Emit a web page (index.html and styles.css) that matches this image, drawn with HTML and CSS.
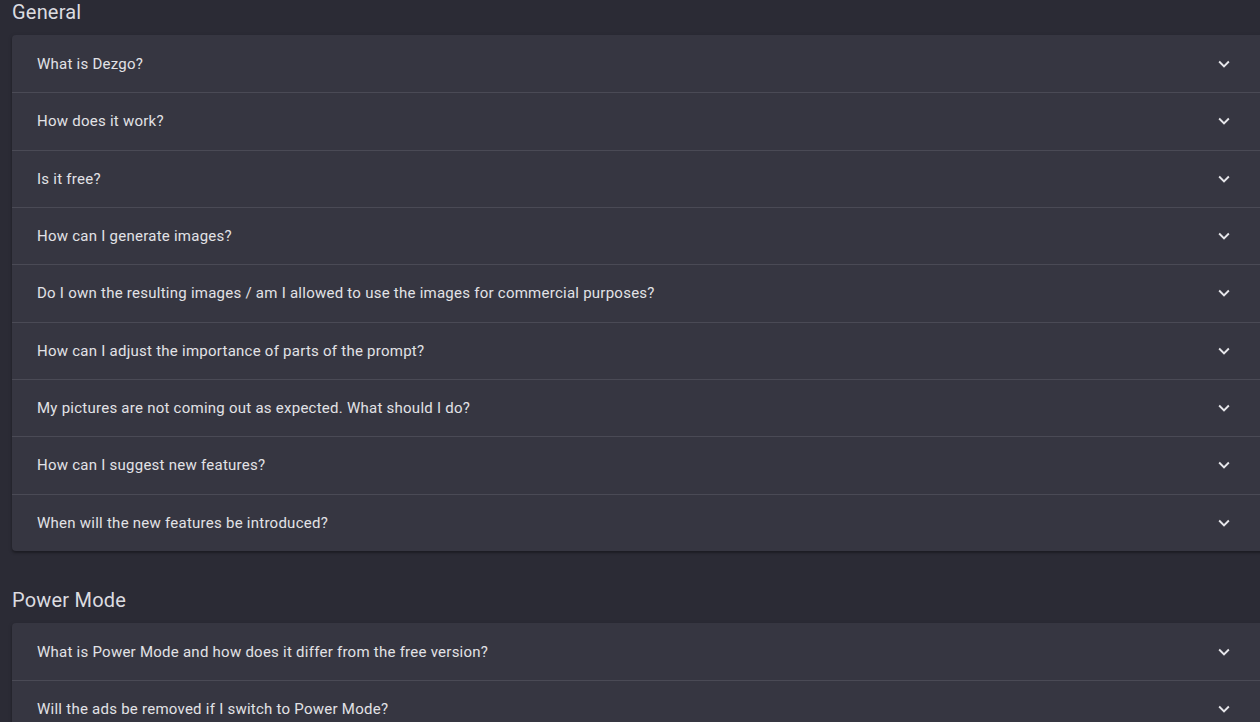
FILE: index.html
```html
<!DOCTYPE html>
<html lang="en">
<head>
    <meta charset="UTF-8">
    <title>FAQ - Dezgo</title>
    <link rel="stylesheet" href="styles.css">
</head>
<body>
    <section class="faq-section">
        <h2 class="faq-title">General</h2>
        <div class="faq-card">
            <div class="faq-item"><span>What is Dezgo?</span><svg class="chevron" viewBox="0 0 24 24"><path d="M7.41 8.59 12 13.17l4.59-4.58L18 10l-6 6-6-6z"/></svg></div>
            <div class="faq-item"><span>How does it work?</span><svg class="chevron" viewBox="0 0 24 24"><path d="M7.41 8.59 12 13.17l4.59-4.58L18 10l-6 6-6-6z"/></svg></div>
            <div class="faq-item"><span>Is it free?</span><svg class="chevron" viewBox="0 0 24 24"><path d="M7.41 8.59 12 13.17l4.59-4.58L18 10l-6 6-6-6z"/></svg></div>
            <div class="faq-item"><span>How can I generate images?</span><svg class="chevron" viewBox="0 0 24 24"><path d="M7.41 8.59 12 13.17l4.59-4.58L18 10l-6 6-6-6z"/></svg></div>
            <div class="faq-item"><span>Do I own the resulting images / am I allowed to use the images for commercial purposes?</span><svg class="chevron" viewBox="0 0 24 24"><path d="M7.41 8.59 12 13.17l4.59-4.58L18 10l-6 6-6-6z"/></svg></div>
            <div class="faq-item"><span>How can I adjust the importance of parts of the prompt?</span><svg class="chevron" viewBox="0 0 24 24"><path d="M7.41 8.59 12 13.17l4.59-4.58L18 10l-6 6-6-6z"/></svg></div>
            <div class="faq-item"><span>My pictures are not coming out as expected. What should I do?</span><svg class="chevron" viewBox="0 0 24 24"><path d="M7.41 8.59 12 13.17l4.59-4.58L18 10l-6 6-6-6z"/></svg></div>
            <div class="faq-item"><span>How can I suggest new features?</span><svg class="chevron" viewBox="0 0 24 24"><path d="M7.41 8.59 12 13.17l4.59-4.58L18 10l-6 6-6-6z"/></svg></div>
            <div class="faq-item"><span>When will the new features be introduced?</span><svg class="chevron" viewBox="0 0 24 24"><path d="M7.41 8.59 12 13.17l4.59-4.58L18 10l-6 6-6-6z"/></svg></div>
        </div>
    </section>

    <section class="faq-section">
        <h2 class="faq-title">Power Mode</h2>
        <div class="faq-card">
            <div class="faq-item"><span>What is Power Mode and how does it differ from the free version?</span><svg class="chevron" viewBox="0 0 24 24"><path d="M7.41 8.59 12 13.17l4.59-4.58L18 10l-6 6-6-6z"/></svg></div>
            <div class="faq-item"><span>Will the ads be removed if I switch to Power Mode?</span><svg class="chevron" viewBox="0 0 24 24"><path d="M7.41 8.59 12 13.17l4.59-4.58L18 10l-6 6-6-6z"/></svg></div>
        </div>
    </section>
</body>
</html>
```

FILE: styles.css
```css
body {
    margin: 0;
    padding: 0 0 0 12px;
    background: #2b2b35;
    color: #e2e2e6;
    font-family: Roboto, 'Liberation Sans', sans-serif;
    overflow: hidden;
}

.faq-section {
    margin-bottom: 37px;
}

.faq-title {
    margin: 0;
    height: 35px;
    line-height: 24px;
    font-size: 20px;
    font-weight: 400;
    letter-spacing: 0.2px;
    color: #dcdce0;
}

.faq-card {
    width: 1260px;
    background: #363641;
    border-radius: 4px;
    box-shadow: 0 2px 2px rgba(0, 0, 0, 0.25), 0 1px 4px rgba(0, 0, 0, 0.15);
}

.faq-item {
    display: flex;
    align-items: center;
    justify-content: space-between;
    height: 56.33px;
    padding: 0 24px 0 25px;
    font-size: 15px;
    letter-spacing: 0.25px;
    border-top: 1px solid #4a4a55;
}

.faq-item:first-child {
    border-top: none;
    height: 57.33px;
}

.chevron {
    width: 22px;
    height: 22px;
    fill: #e6e6ea;
    margin-right: 13px;
}
```
